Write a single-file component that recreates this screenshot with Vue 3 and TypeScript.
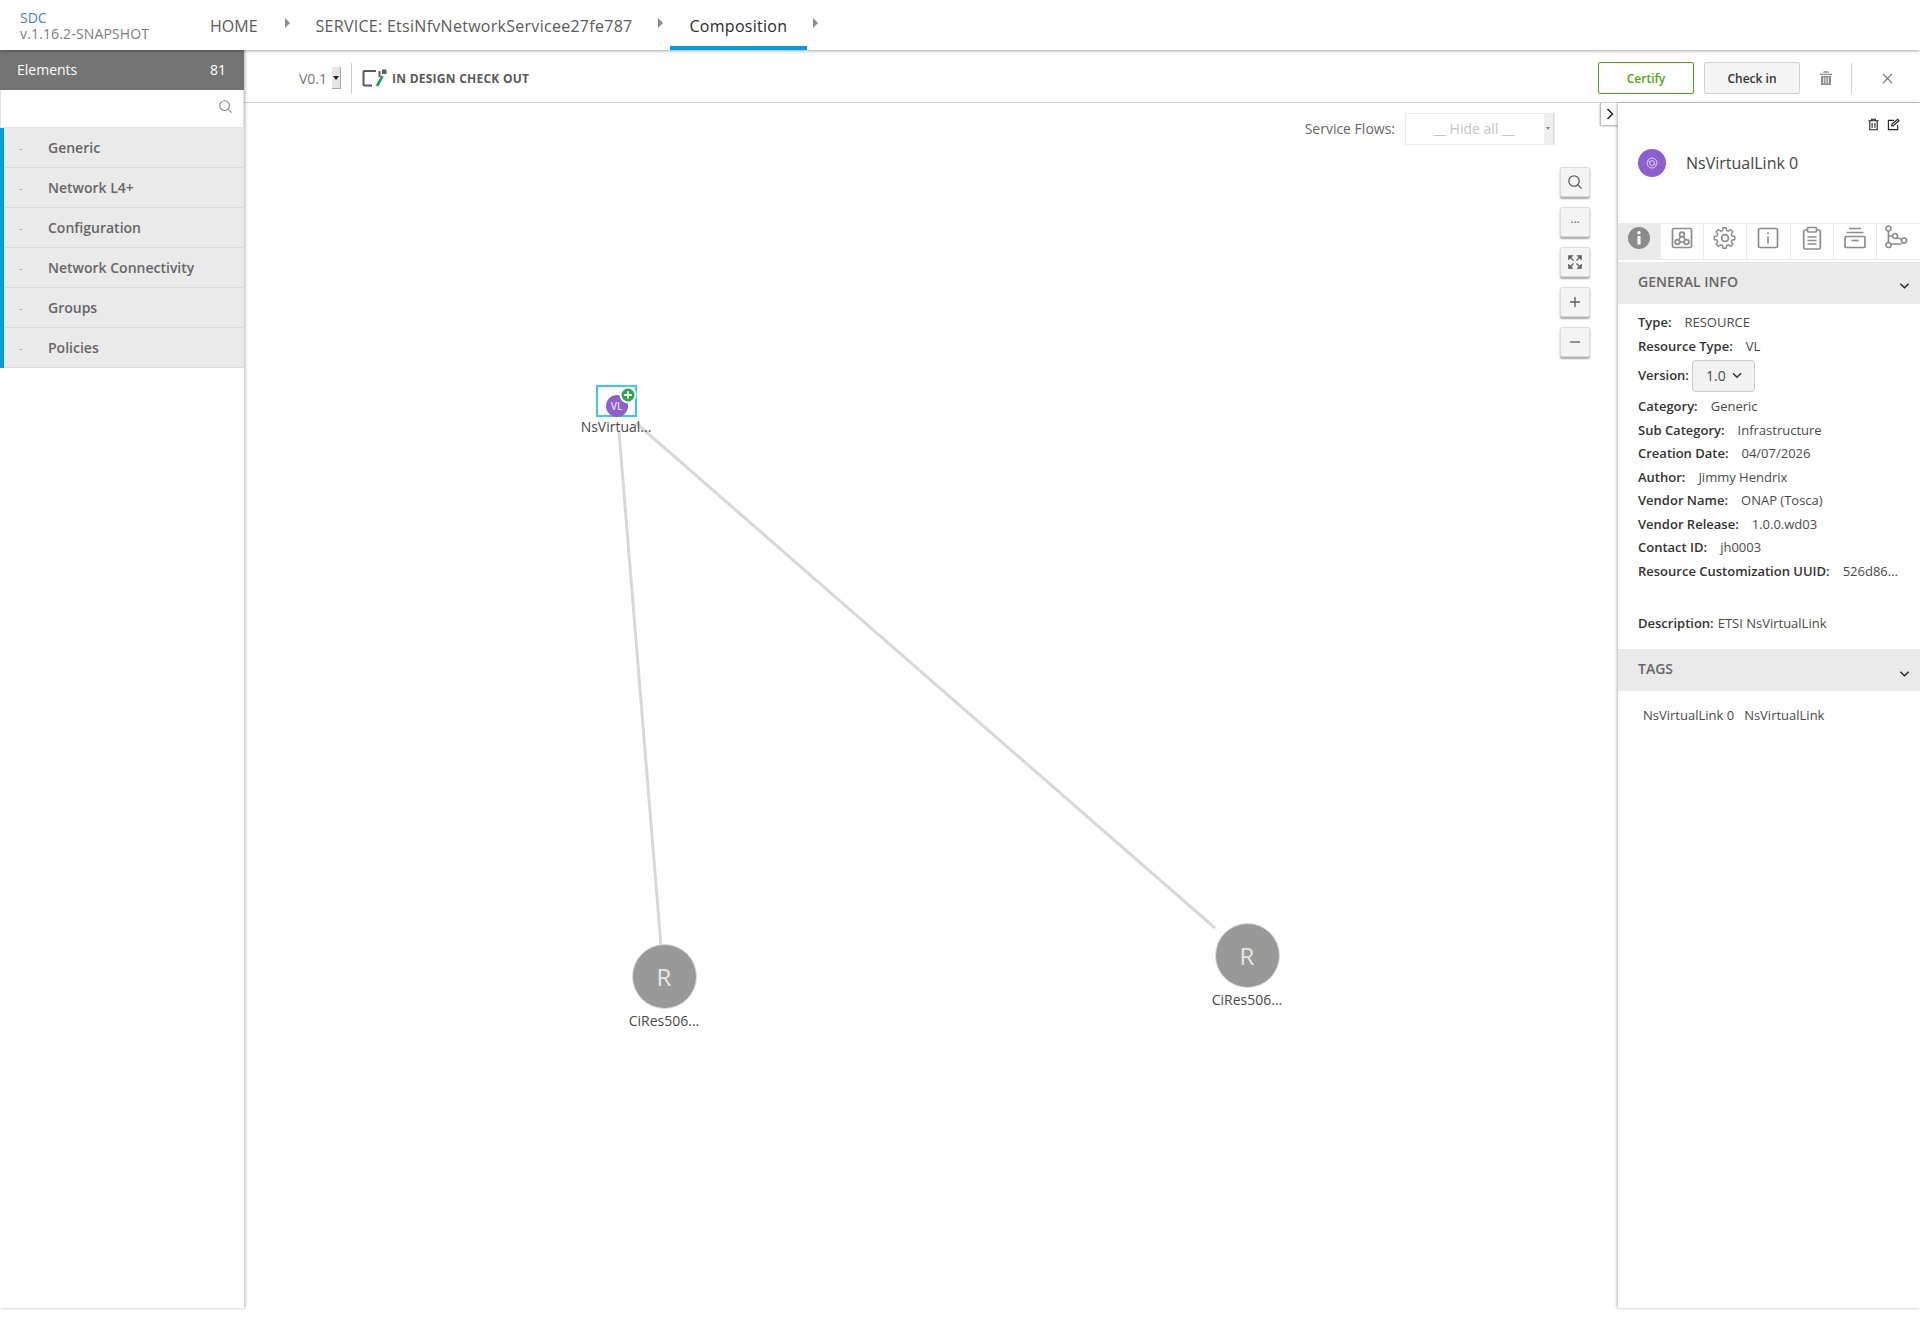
<template>
  <div class="app">
    <header class="topbar">
      <div class="brand">
        <span class="brand__name">SDC</span>
        <span class="brand__version">v.1.16.2-SNAPSHOT</span>
      </div>
      <nav class="crumbs">
        <template v-for="crumb in crumbs" :key="crumb.label">
          <a class="crumb" :class="{ active: crumb.active, wide: crumb.label !== 'HOME' }">{{ crumb.label }}</a>
          <span class="crumb__caret" :class="{ 'crumb__caret--tight': crumb.active }" />
        </template>
      </nav>
    </header>

    <div class="main">
      <aside class="palette">
        <div class="palette__head"><span>Elements</span><span>81</span></div>
        <div class="palette__search">
          <svg class="search-icon" viewBox="0 0 16 16"><circle cx="7" cy="7" r="5.2" /><path d="M11 11l3.5 3.5" /></svg>
        </div>
        <ul class="palette__list">
          <li v-for="group in groups" :key="group" class="palette__item">
            <span class="palette__toggle">-</span>{{ group }}
          </li>
        </ul>
      </aside>

      <div class="work">
        <div class="toolbar">
          <span class="version">V0.1</span>
          <span class="version-arrow" />
          <span class="toolbar__sep" />
          <svg class="state-icon" viewBox="0 0 26 18">
            <path class="state-icon__frame" d="M14 2H2.5a1 1 0 0 0-1 1v12.5a1 1 0 0 0 1 1H10" />
            <path class="state-icon__frame" d="M17.5 2v6" />
            <rect x="20" y="0.5" width="4.5" height="4.5" rx="0.5" fill="#5a5a5a" />
            <path d="M20.5 7L15 17" stroke="#1e9b52" stroke-width="2.6" fill="none" />
          </svg>
          <span class="state-label">IN DESIGN CHECK OUT</span>
          <div class="toolbar__actions">
            <button class="btn btn--certify">Certify</button>
            <button class="btn btn--checkin">Check in</button>
            <svg class="toolbar__trash" viewBox="0 0 16 18">
              <path d="M1 4h14v1.6H1zM5.5 1.2h5l.8 1.8H4.7zM2.3 6.6h11.4V17H2.3z" fill="#8c8c8c" />
              <path d="M5.4 8v7.5M8 8v7.5M10.6 8v7.5" stroke="#fff" stroke-width="1" />
            </svg>
            <span class="toolbar__sep toolbar__sep--right" />
            <svg class="toolbar__close" viewBox="0 0 12 12"><path d="M1 1l10 10M11 1L1 11" /></svg>
          </div>
        </div>

        <div class="stage">
          <section class="canvas">
            <svg class="links" viewBox="0 0 1374 1217">
              <line x1="375" y1="329" x2="417" y2="843" />
              <line x1="392" y1="320" x2="971" y2="825" />
            </svg>

            <div class="flows">
              <label>Service Flows:</label>
              <div class="flows__select"><span>__ Hide all __</span><i /></div>
            </div>

            <div class="zoom-tools">
              <button class="zoom-tool">
                <svg viewBox="0 0 16 16"><circle cx="7" cy="7" r="5.2" /><path d="M10.8 10.8l3.8 3.8" /></svg>
              </button>
              <button class="zoom-tool zoom-tool--dots">...</button>
              <button class="zoom-tool">
                <svg viewBox="0 0 16 16">
                  <path d="M1.5 6V1.5H6L1.5 6zM14.5 6V1.5H10L14.5 6zM1.5 10v4.5H6L1.5 10zM14.5 10v4.5H10l4.5-4.5z" fill="#5f5f5f" stroke="#5f5f5f" stroke-width="0.6" />
                  <path d="M3.5 3.5l3 3M12.5 3.5l-3 3M3.5 12.5l3-3M12.5 12.5l-3-3" />
                </svg>
              </button>
              <button class="zoom-tool">
                <svg viewBox="0 0 16 16"><path d="M3 8h10M8 3v10" /></svg>
              </button>
              <button class="zoom-tool">
                <svg viewBox="0 0 16 16"><path d="M3 8h10" /></svg>
              </button>
            </div>

            <div class="node node--vl">
              <div class="node__box">
                <span class="node__vl">VL</span>
                <svg class="node__plus" viewBox="0 0 18 18">
                  <circle cx="9" cy="9" r="8.5" fill="#fff" />
                  <circle cx="9" cy="9" r="6.5" fill="#2ba84a" />
                  <path d="M5.2 9h7.6M9 5.2v7.6" stroke="#fff" stroke-width="1.8" />
                </svg>
              </div>
              <span class="node__label">NsVirtual...</span>
            </div>

            <div v-for="node in resourceNodes" :key="node.left" class="node node--res" :style="{ left: node.left + 'px', top: node.top + 'px' }">
              <span class="node__circle">R</span>
              <span class="node__label">CiRes506...</span>
            </div>

            <button class="collapse">
              <svg viewBox="0 0 10 14"><path d="M2.5 2l5 5-5 5" /></svg>
            </button>
          </section>

          <aside class="details">
            <div class="details__actions">
              <svg viewBox="0 0 14 14">
                <path d="M1.5 3h11M5 3V1.3h4V3M3 3v9.7h8V3M5.5 5.5v5M8.5 5.5v5" />
              </svg>
              <svg viewBox="0 0 14 14">
                <path d="M11.5 7.5v5h-10v-10h6" />
                <path d="M5.5 6.5l6-5.2 1.4 1.5-6 5.4-1.9.3z" />
              </svg>
            </div>
            <div class="details__title">
              <span class="details__badge">
                <svg viewBox="0 0 14 14">
                  <circle cx="7" cy="7" r="5" />
                  <circle cx="7" cy="7" r="2.4" />
                  <path d="M3 4.5l2 1.5M11 9.5l-2-1.5" />
                </svg>
              </span>
              <span>NsVirtualLink 0</span>
            </div>

            <div class="tabs">
              <span class="tab active">
                <svg viewBox="0 0 24 24">
                  <circle cx="12" cy="12" r="11" fill="#8c8c8c" />
                  <circle cx="12" cy="6.8" r="1.7" fill="#fff" />
                  <rect x="10.5" y="10" width="3" height="8.5" fill="#fff" />
                </svg>
              </span>
              <span class="tab">
                <svg viewBox="0 0 24 24" class="tab__line">
                  <rect x="2.5" y="2.5" width="19" height="19" rx="1.5" />
                  <circle cx="12" cy="8.5" r="2.4" />
                  <circle cx="7.5" cy="16" r="2.4" />
                  <circle cx="16.5" cy="16" r="2.4" />
                  <path d="M10.8 10.6l-2.2 3.4M13.2 10.6l2.2 3.4M10 16h4" />
                </svg>
              </span>
              <span class="tab">
                <svg viewBox="0 0 24 24" class="tab__line">
                  <circle cx="12" cy="12" r="3.4" />
                  <path d="M10.2 1.5h3.6l.6 3.2 2 .9 2.8-1.8 2.5 2.5-1.8 2.8.8 2 3.2.6v3.6l-3.2.6-.8 2 1.8 2.8-2.5 2.5-2.8-1.8-2 .8-.6 3.2h-3.6l-.6-3.2-2-.8-2.8 1.8-2.5-2.5 1.8-2.8-.8-2-3.2-.6v-3.6l3.2-.6.8-2-1.8-2.8 2.5-2.5 2.8 1.8 2-.9z" transform="translate(1.2 .4) scale(.86)" />
                </svg>
              </span>
              <span class="tab">
                <svg viewBox="0 0 24 24" class="tab__line">
                  <rect x="2.5" y="2.5" width="19" height="19" rx="1.5" />
                  <path d="M12 10.5v7" />
                  <path d="M12 6.2v2" />
                </svg>
              </span>
              <span class="tab">
                <svg viewBox="0 0 24 24" class="tab__line">
                  <path d="M7.5 4H5.2A1.5 1.5 0 0 0 3.7 5.5v16A1.5 1.5 0 0 0 5.2 23h13.6a1.5 1.5 0 0 0 1.5-1.5v-16A1.5 1.5 0 0 0 18.8 4h-2.3" />
                  <rect x="7.5" y="1.5" width="9" height="4.5" rx="1" />
                  <path d="M7.5 11h9M7.5 14.5h9M7.5 18h9" />
                </svg>
              </span>
              <span class="tab">
                <svg viewBox="0 0 24 24" class="tab__line">
                  <path d="M6 2.5h12M3.5 6.5h17" />
                  <rect x="2" y="10.5" width="20" height="11" rx="1" />
                  <path d="M8.5 14.5h7" />
                </svg>
              </span>
              <span class="tab tab--last">
                <svg viewBox="0 0 24 24" class="tab__line">
                  <circle cx="4.5" cy="3.5" r="2.5" />
                  <circle cx="4.5" cy="20" r="2.5" />
                  <circle cx="20" cy="15.5" r="2.5" />
                  <circle cx="11" cy="11" r="2.5" />
                  <path d="M4.5 6v11.5M4.5 11h4M6.5 19h11M13 13l5 1" />
                </svg>
              </span>
            </div>

            <div class="section-head">GENERAL INFO<svg viewBox="0 0 12 8"><path d="M1.5 1.5L6 6l4.5-4.5" /></svg></div>
            <div class="info">
              <p><b>Type:</b>RESOURCE</p>
              <p><b>Resource Type:</b>VL</p>
              <p class="info__version"><b>Version:</b>
                <span class="version-select">1.0
                  <svg viewBox="0 0 10 7"><path d="M1 1.2l4 4 4-4" /></svg>
                </span>
              </p>
              <p><b>Category:</b>Generic</p>
              <p><b>Sub Category:</b>Infrastructure</p>
              <p><b>Creation Date:</b>04/07/2026</p>
              <p><b>Author:</b>Jimmy Hendrix</p>
              <p><b>Vendor Name:</b>ONAP (Tosca)</p>
              <p><b>Vendor Release:</b>1.0.0.wd03</p>
              <p><b>Contact ID:</b>jh0003</p>
              <p><b>Resource Customization UUID:</b>526d86...</p>
              <p class="info__desc"><b class="tight">Description:</b>ETSI NsVirtualLink</p>
            </div>
            <div class="section-head section-head--tags">TAGS<svg viewBox="0 0 12 8"><path d="M1.5 1.5L6 6l4.5-4.5" /></svg></div>
            <div class="tags"><span>NsVirtualLink 0</span><span>NsVirtualLink</span></div>
          </aside>
        </div>
      </div>
    </div>
  </div>
</template>

<script setup lang="ts">
interface Crumb {
  label: string
  active?: boolean
}

const crumbs: Crumb[] = [
  { label: 'HOME' },
  { label: 'SERVICE: EtsiNfvNetworkServicee27fe787' },
  { label: 'Composition', active: true },
]

const groups = ['Generic', 'Network L4+', 'Configuration', 'Network Connectivity', 'Groups', 'Policies']

const resourceNodes = [
  { left: 375, top: 841 },
  { left: 958, top: 820 },
]
</script>

<style>
html,
body {
  margin: 0;
  background: #fff;
}
</style>

<style scoped>
.app {
  height: 1319px;
  display: flex;
  flex-direction: column;
  font-family: 'Open Sans', 'Noto Sans', sans-serif;
  color: #5a5a5a;
  overflow: hidden;
}

.topbar {
  height: 50px;
  flex: none;
  display: flex;
  position: relative;
  z-index: 3;
  background: #fff;
  box-shadow: 0 1px 3px rgba(0, 0, 0, 0.35);
}

.brand {
  width: 210px;
  padding: 10px 0 0 20px;
  box-sizing: border-box;
  display: flex;
  flex-direction: column;
  font-size: 14px;
  line-height: 16px;
}

.brand__name {
  color: #3c86c6;
}

.brand__version {
  color: #7d7d7d;
  letter-spacing: 0.15px;
}

.crumbs {
  display: flex;
  align-items: center;
  height: 50px;
  font-size: 16px;
}

.crumb {
  color: #5a5a5a;
  height: 50px;
  box-sizing: border-box;
  padding-top: 1px;
  line-height: 50px;
}

.crumb.wide {
  letter-spacing: 0.28px;
  margin-right: -2px;
}

.crumb.active {
  color: #2b2b2b;
  padding: 1px 20px 0;
  border-bottom: 4px solid #009fdb;
  margin-left: -19px;
  margin-right: 0;
}

.crumb__caret {
  width: 0;
  height: 0;
  margin: -4px 26px 0 27px;
  border-left: 5px solid #8c8c8c;
  border-top: 5px solid transparent;
  border-bottom: 5px solid transparent;
}

.crumb__caret--tight {
  margin-left: 6px;
}

.main {
  flex: 1;
  display: flex;
  min-height: 0;
}

.palette {
  width: 244px;
  flex: none;
  height: 1258px;
  position: relative;
  z-index: 2;
  background: #fff;
  box-shadow: 1px 0 3px rgba(0, 0, 0, 0.3);
}

.palette__head {
  height: 40px;
  padding: 0 18px 2px 17px;
  box-sizing: border-box;
  display: flex;
  align-items: center;
  justify-content: space-between;
  background: #747474;
  color: #fff;
  font-size: 14px;
}

.palette__search {
  height: 38px;
  display: flex;
  align-items: center;
  justify-content: flex-end;
  padding: 0 10px 4px 0;
  border: 1px solid #e3e3e3;
  border-top: 0;
  box-sizing: border-box;
}

.search-icon {
  width: 15px;
  height: 15px;
  fill: none;
  stroke: #8c8c8c;
  stroke-width: 1.2;
}

.palette__list {
  margin: 0;
  padding: 0;
  list-style: none;
  border-left: 4px solid #009fdb;
}

.palette__item {
  height: 40px;
  box-sizing: border-box;
  display: flex;
  align-items: center;
  background: #eaeaea;
  border-bottom: 1px solid #dcdcdc;
  font-size: 14px;
  font-weight: 600;
  color: #666;
}

.palette__toggle {
  width: 44px;
  padding-left: 15px;
  box-sizing: border-box;
  font-size: 10px;
  font-weight: 400;
  color: #999;
}

.work {
  flex: 1;
  min-width: 0;
  display: flex;
  flex-direction: column;
}

.toolbar {
  height: 53px;
  flex: none;
  box-sizing: border-box;
  display: flex;
  align-items: center;
  padding: 4px 0 0 55px;
  border-bottom: 1px solid #d2d2d2;
  background: #fff;
}

.version {
  font-size: 14px;
  color: #777;
}

.version-arrow {
  width: 9px;
  height: 22px;
  margin-left: 5px;
  box-sizing: border-box;
  background: #e6e6e6;
  border-right: 1px solid #aaa;
  border-bottom: 1px solid #aaa;
  position: relative;
}

.version-arrow::after {
  content: '';
  position: absolute;
  left: 1px;
  top: 9px;
  border-top: 4px solid #222;
  border-left: 3px solid transparent;
  border-right: 3px solid transparent;
}

.toolbar__sep {
  width: 1px;
  height: 31px;
  margin-left: 10px;
  background: #d2d2d2;
}

.state-icon {
  width: 26px;
  height: 18px;
  margin-left: 10px;
}

.state-icon__frame {
  fill: none;
  stroke: #5a5a5a;
  stroke-width: 2;
}

.state-label {
  margin-left: 4px;
  font-size: 12px;
  font-weight: 700;
  letter-spacing: 0.25px;
  color: #5a5a5a;
}

.toolbar__actions {
  margin-left: auto;
  display: flex;
  align-items: center;
}

.btn {
  width: 96px;
  height: 32px;
  padding: 0;
  border-radius: 2px;
  font-family: inherit;
  font-size: 12px;
  font-weight: 600;
  box-sizing: border-box;
}

.btn--certify {
  background: #fff;
  border: 1px solid #4ca90c;
  color: #4ca90c;
}

.btn--checkin {
  margin-left: 10px;
  background: #f4f4f4;
  border: 1px solid #d2d2d2;
  color: #333;
}

.toolbar__trash {
  width: 14px;
  height: 16px;
  margin-left: 19px;
}

.toolbar__sep--right {
  margin-left: 18px;
}

.toolbar__close {
  width: 11px;
  height: 11px;
  margin: 0 27px 0 30px;
  fill: none;
  stroke: #6f6f6f;
  stroke-width: 1.3;
}

.stage {
  flex: 1;
  min-height: 0;
  display: flex;
}

.canvas {
  flex: 1;
  min-width: 0;
  position: relative;
}

.links {
  position: absolute;
  left: 0;
  top: 0;
  width: 1374px;
  height: 1217px;
}

.links line {
  stroke: #d8d8d8;
  stroke-width: 3;
}

.flows {
  position: absolute;
  right: 63px;
  top: 10px;
  display: flex;
  align-items: center;
  gap: 10px;
  font-size: 14px;
  color: #666;
}

.flows label {
  padding-bottom: 1px;
}

.flows__select {
  width: 150px;
  height: 32px;
  box-sizing: border-box;
  border: 1px solid #eaeaea;
  display: flex;
  align-items: center;
  justify-content: center;
  color: #c4c4c4;
  position: relative;
  padding: 0 12px 1px 0;
}

.flows__select i {
  position: absolute;
  right: 0;
  top: 0;
  width: 9px;
  height: 30px;
  background: #efefef;
  border-right: 1px solid #ddd;
}

.flows__select i::after {
  content: '';
  position: absolute;
  left: 2px;
  top: 13px;
  border-top: 3px solid #888;
  border-left: 2.5px solid transparent;
  border-right: 2.5px solid transparent;
}

.zoom-tools {
  position: absolute;
  right: 28px;
  top: 64px;
  display: flex;
  flex-direction: column;
  gap: 10px;
}

.zoom-tool {
  width: 30px;
  height: 30px;
  padding: 0;
  box-sizing: border-box;
  display: flex;
  align-items: center;
  justify-content: center;
  background: #f4f4f4;
  border: 1px solid #dcdcdc;
  border-radius: 2px;
  box-shadow: 0 2px 2px rgba(0, 0, 0, 0.35);
  color: #5f5f5f;
  font-family: inherit;
}

.zoom-tool svg {
  width: 16px;
  height: 16px;
  fill: none;
  stroke: #5f5f5f;
  stroke-width: 1.3;
}

.zoom-tool--dots {
  font-size: 12px;
  line-height: 18px;
  padding-bottom: 6px;
}

.node {
  position: absolute;
  display: flex;
  flex-direction: column;
  align-items: center;
}

.node__label {
  font-size: 14px;
  line-height: 18px;
  color: #4a4a4a;
  white-space: nowrap;
}

.node--vl {
  left: 327px;
  top: 282px;
  width: 90px;
}

.node__box {
  width: 41px;
  height: 32px;
  box-sizing: border-box;
  border: 2px solid #3cc5f5;
  background: #fff;
  position: relative;
  margin-bottom: 1px;
}

.node__vl {
  position: absolute;
  left: 8px;
  top: 8px;
  width: 22px;
  height: 22px;
  border-radius: 50%;
  background: #8e5fce;
  color: #e8dff5;
  font-size: 10px;
  font-weight: 600;
  line-height: 22px;
  text-align: center;
}

.node__plus {
  position: absolute;
  right: -2px;
  top: -1px;
  width: 18px;
  height: 18px;
}

.node--res {
  width: 90px;
}

.node__circle {
  width: 65px;
  height: 65px;
  box-sizing: border-box;
  border-radius: 50%;
  background: #999;
  border: 1px solid #ddd;
  color: #e6e6e6;
  font-size: 24px;
  line-height: 63px;
  text-align: center;
  margin-bottom: 3px;
}

.collapse {
  position: absolute;
  right: 0;
  top: 0;
  width: 18px;
  height: 22px;
  padding: 0;
  display: flex;
  align-items: center;
  justify-content: center;
  background: #fff;
  border: 0;
  border-left: 1px solid #bbb;
  box-shadow: 0 1px 2px rgba(0, 0, 0, 0.35);
}

.collapse svg {
  width: 10px;
  height: 14px;
  fill: none;
  stroke: #222;
  stroke-width: 1.5;
}

.details {
  width: 302px;
  height: 1205px;
  flex: none;
  box-sizing: border-box;
  background: #fff;
  box-shadow: -1px 0 3px rgba(0, 0, 0, 0.3);
  position: relative;
}

.details__actions {
  height: 46px;
  box-sizing: border-box;
  display: flex;
  justify-content: flex-end;
  gap: 7px;
  padding: 15px 20px 0 0;
}

.details__actions svg {
  width: 13px;
  height: 13px;
  fill: none;
  stroke: #222;
  stroke-width: 1.2;
}

.details__title {
  height: 74px;
  display: flex;
  align-items: flex-start;
  padding-left: 20px;
  font-size: 16px;
  line-height: 28px;
  color: #444;
}

.details__badge {
  width: 28px;
  height: 28px;
  margin-right: 20px;
  flex: none;
  border-radius: 50%;
  background: #8e5fce;
  display: flex;
  align-items: center;
  justify-content: center;
}

.details__badge svg {
  width: 14px;
  height: 14px;
  fill: none;
  stroke: #dcd0f0;
  stroke-width: 1;
}

.tabs {
  height: 37px;
  display: grid;
  grid-template-columns: repeat(7, 1fr);
  border-top: 1px solid #eaeaea;
  border-bottom: 1px solid #eaeaea;
  box-sizing: border-box;
}

.tab {
  display: flex;
  align-items: flex-start;
  justify-content: center;
  padding-top: 2px;
  border-right: 1px solid #eaeaea;
}

.tab--last {
  border-right: 0;
  padding: 1px 4px 0 0;
}

.tab.active {
  background: #eaeaea;
}

.tab svg {
  width: 24px;
  height: 24px;
}

.tab__line {
  fill: none;
  stroke: #8c8c8c;
  stroke-width: 1.7;
}

.section-head {
  height: 42px;
  margin-top: 2px;
  box-sizing: border-box;
  display: flex;
  align-items: center;
  justify-content: space-between;
  padding: 0 10px 4px 20px;
  background: #eaeaea;
  font-size: 14px;
  font-weight: 600;
  color: #666;
}

.section-head svg {
  width: 11px;
  height: 8px;
  margin-top: 10px;
  fill: none;
  stroke: #222;
  stroke-width: 1.5;
}

.section-head--tags {
  margin-top: 14px;
  padding-bottom: 3px;
}

.info {
  padding: 7.3px 10px 0 20px;
  font-size: 13px;
  line-height: 23.5px;
  color: #4a4a4a;
}

.info p {
  margin: 0;
  white-space: nowrap;
}

.info b {
  font-weight: 600;
  margin-right: 13px;
  color: #333;
}

.info .tight {
  margin-right: 4px;
}

.info__version {
  height: 37px;
  box-sizing: border-box;
  padding-bottom: 2px;
  display: flex;
  align-items: center;
}

.info__version b {
  margin-right: 3px;
}

.version-select {
  width: 63px;
  height: 32px;
  box-sizing: border-box;
  display: flex;
  align-items: center;
  justify-content: center;
  gap: 6px;
  padding-left: 1px;
  background: #f2f2f2;
  border: 1px solid #ccc;
  border-radius: 4px;
  font-size: 14px;
}

.version-select svg {
  width: 10px;
  height: 7px;
  fill: none;
  stroke: #333;
  stroke-width: 1.5;
}

.info__desc {
  margin-top: 28.4px !important;
}

.tags {
  display: flex;
  gap: 10px;
  padding: 15px 0 0 25px;
  font-size: 13px;
  color: #4a4a4a;
}
</style>
